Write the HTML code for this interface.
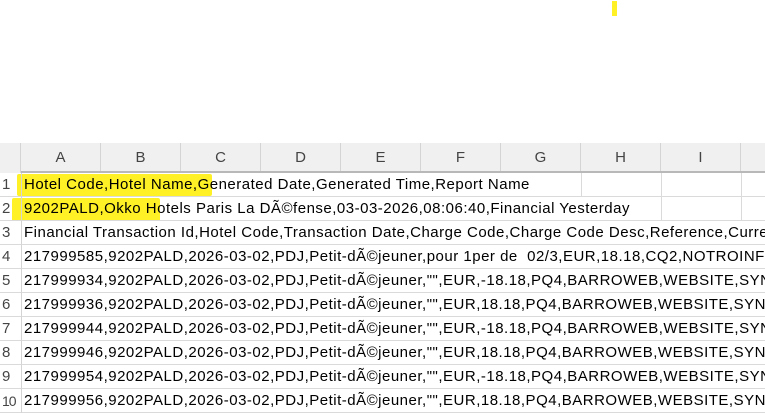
<!DOCTYPE html>
<html><head><meta charset="utf-8"><style>
*{margin:0;padding:0;box-sizing:border-box}
body{width:765px;height:413px;background:#fff;position:relative;overflow:hidden;font-family:"Liberation Sans",sans-serif}
.hdr{position:absolute;left:0;top:143px;width:765px;height:30px;background:#f0f0f0;border-bottom:2px solid #b8b8b8}
.hl{position:absolute;top:0;height:28px;color:#444;font-size:15px;line-height:30px;text-align:center;width:80px;border-right:1px solid #d4d4d4}
.rn{position:absolute;left:0;width:21px;color:#444;font-size:15px;text-align:left;padding-left:2px}
.row{position:absolute;left:0;width:765px;height:24px;border-bottom:1px solid #dadada}
.t{position:absolute;left:24px;top:0;line-height:24px;font-size:15px;letter-spacing:0.5px;color:#000;white-space:nowrap}
.v{position:absolute;top:0;height:24px;border-left:1px solid #dadada}
.y{position:absolute;background:#ffee00;opacity:.85}
.corner{position:absolute;left:0;top:143px;width:21px;height:30px;background:#f0f0f0;border-right:1px solid #d4d4d4}
.lc{position:absolute;left:21px;top:173px;height:240px;border-left:1px solid #d4d4d4}
</style></head><body>
<div class="y" style="left:612px;top:1px;width:5px;height:15px"></div>
<div class="hdr">
<div class="hl" style="left:21px">A</div><div class="hl" style="left:101px">B</div><div class="hl" style="left:181px">C</div><div class="hl" style="left:261px">D</div><div class="hl" style="left:341px">E</div><div class="hl" style="left:421px">F</div><div class="hl" style="left:501px">G</div><div class="hl" style="left:581px">H</div><div class="hl" style="left:661px">I</div>
</div>
<div class="corner"></div>
<div class="y" style="left:17px;top:174px;width:195px;height:22px;border-radius:2px"></div>
<div class="y" style="left:12px;top:198px;width:148px;height:23px;border-radius:2px"></div>
<div class="row" style="top:173px"><span class="rn" style="line-height:24px">1</span><div class="v" style="left:581px"></div><div class="v" style="left:661px"></div><div class="v" style="left:741px"></div><span class="t">Hotel Code,Hotel Name,Generated Date,Generated Time,Report Name</span></div>
<div class="row" style="top:197px"><span class="rn" style="line-height:24px">2</span><div class="v" style="left:661px"></div><div class="v" style="left:741px"></div><span class="t">9202PALD,Okko Hotels Paris La DÃ©fense,03-03-2026,08:06:40,Financial Yesterday</span></div>
<div class="row" style="top:221px"><span class="rn" style="line-height:24px">3</span><span class="t">Financial Transaction Id,Hotel Code,Transaction Date,Charge Code,Charge Code Desc,Reference,Currency</span></div>
<div class="row" style="top:245px"><span class="rn" style="line-height:24px">4</span><span class="t">217999585,9202PALD,2026-03-02,PDJ,Petit-dÃ©jeuner,pour 1per de&nbsp; 02/3,EUR,18.18,CQ2,NOTROINF</span></div>
<div class="row" style="top:269px"><span class="rn" style="line-height:24px">5</span><span class="t">217999934,9202PALD,2026-03-02,PDJ,Petit-dÃ©jeuner,"",EUR,-18.18,PQ4,BARROWEB,WEBSITE,SYNXIS</span></div>
<div class="row" style="top:293px"><span class="rn" style="line-height:24px">6</span><span class="t">217999936,9202PALD,2026-03-02,PDJ,Petit-dÃ©jeuner,"",EUR,18.18,PQ4,BARROWEB,WEBSITE,SYNXIS</span></div>
<div class="row" style="top:317px"><span class="rn" style="line-height:24px">7</span><span class="t">217999944,9202PALD,2026-03-02,PDJ,Petit-dÃ©jeuner,"",EUR,-18.18,PQ4,BARROWEB,WEBSITE,SYNXIS</span></div>
<div class="row" style="top:341px"><span class="rn" style="line-height:24px">8</span><span class="t">217999946,9202PALD,2026-03-02,PDJ,Petit-dÃ©jeuner,"",EUR,18.18,PQ4,BARROWEB,WEBSITE,SYNXIS</span></div>
<div class="row" style="top:365px"><span class="rn" style="line-height:24px">9</span><span class="t">217999954,9202PALD,2026-03-02,PDJ,Petit-dÃ©jeuner,"",EUR,-18.18,PQ4,BARROWEB,WEBSITE,SYNXIS</span></div>
<div class="row" style="top:389px"><span class="rn" style="line-height:24px;font-size:14px;letter-spacing:-1px">10</span><span class="t">217999956,9202PALD,2026-03-02,PDJ,Petit-dÃ©jeuner,"",EUR,18.18,PQ4,BARROWEB,WEBSITE,SYNXIS</span></div>
<div class="lc"></div>
</body></html>
